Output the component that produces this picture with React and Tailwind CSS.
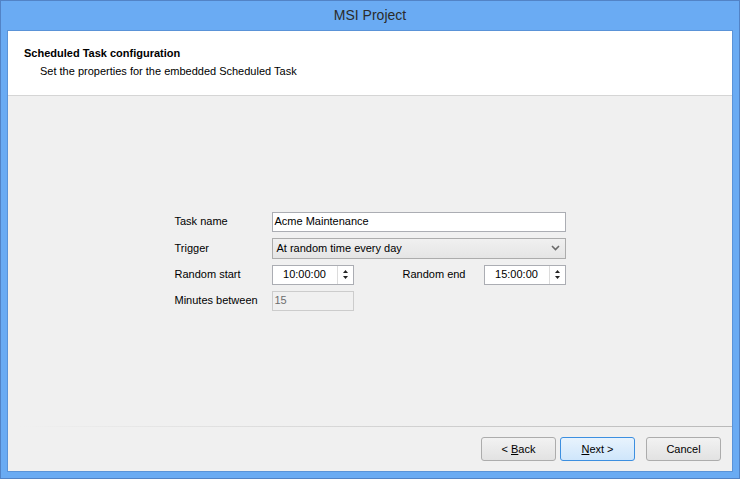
import React from 'react'

const font = { fontFamily: '"Liberation Sans", Arial, sans-serif' }

function SpinBox({ value }) {
  return (
    <div className="flex h-[20px] w-[82px] border border-[#abadb3] bg-white">
      <div className="flex-1 flex items-center justify-center text-[11px] text-black border-r border-[#dcdcdc]">
        {value}
      </div>
      <div className="w-[15px] flex flex-col items-center justify-center gap-[3px]">
        <svg width="5" height="3" viewBox="0 0 5 3"><path d="M2.5 0 L5 3 L0 3 Z" fill="#222" /></svg>
        <svg width="5" height="3" viewBox="0 0 5 3"><path d="M0 0 L5 0 L2.5 3 Z" fill="#222" /></svg>
      </div>
    </div>
  )
}

function Button({ children, primary }) {
  return (
    <button
      className={
        primary
          ? 'w-[75px] h-[24px] rounded-[3px] border border-[#3c8fe0] bg-gradient-to-b from-[#e8f3fd] to-[#cfe6fb] text-[11px] text-black'
          : 'w-[75px] h-[24px] rounded-[3px] border border-[#acacac] bg-gradient-to-b from-[#f2f2f2] to-[#e2e2e2] text-[11px] text-black'
      }
    >
      {children}
    </button>
  )
}

export default function App() {
  return (
    <div
      className="w-[740px] h-[479px] bg-[#6aabf3] border border-[#5283c6] flex flex-col"
      style={font}
    >
      {/* Title bar */}
      <div className="h-[29px] flex items-center justify-center text-[14px] text-[#2b2b2b]">
        MSI Project
      </div>

      {/* Client area */}
      <div className="mx-[6px] mb-[6px] flex-1 border border-[#5a93d8] bg-[#f0f0f0] flex flex-col">
        {/* Header */}
        <div className="h-[65px] bg-white border-b border-[#d5d5d5] pl-[16px] pt-[15px]">
          <div className="text-[11px] font-bold text-black leading-[14px]">Scheduled Task configuration</div>
          <div className="text-[11px] text-black leading-[14px] pl-[16px] mt-[4px]">
            Set the properties for the embedded Scheduled Task
          </div>
        </div>

        {/* Form */}
        <div className="flex-1 flex items-center justify-center">
          <div className="grid grid-cols-[97px_82px_49px_81px_82px] gap-y-[6px] text-[11px] text-black">
            <div className="flex items-center h-[20px]">Task name</div>
            <div className="col-span-4 h-[20px] border border-[#abadb3] bg-white flex items-center px-[2px]">
              Acme Maintenance
            </div>

            <div className="flex items-center h-[21px]">Trigger</div>
            <div className="col-span-4 h-[21px] border border-[#acacac] bg-gradient-to-b from-[#f0f0f0] to-[#e5e5e5] flex items-center justify-between pl-[4px] pr-[5px]">
              <span>At random time every day</span>
              <svg width="9" height="6" viewBox="0 0 9 6">
                <path d="M1 1 L4.5 4.5 L8 1" fill="none" stroke="#6a6a6a" strokeWidth="1.6" />
              </svg>
            </div>

            <div className="flex items-center h-[20px]">Random start</div>
            <SpinBox value="10:00:00" />
            <div />
            <div className="flex items-center h-[20px]">Random end</div>
            <SpinBox value="15:00:00" />

            <div className="flex items-center h-[20px]">Minutes between</div>
            <div className="h-[20px] border border-[#cccccc] bg-[#f0f0f0] flex items-center px-[2px] text-[#6d6d6d]">
              15
            </div>
          </div>
        </div>

        {/* Footer */}
        <div className="h-px ml-[12px] bg-gradient-to-r from-[#f0f0f0] via-[#d4d4d4] to-[#b9b9b9]" />
        <div className="flex justify-end items-center pt-[10px] pb-[10px] pr-[11px]">
          <Button>
            &lt; <span className="underline">B</span>ack
          </Button>
          <div className="w-[4px]" />
          <Button primary>
            <span className="underline">N</span>ext &gt;
          </Button>
          <div className="w-[11px]" />
          <Button>Cancel</Button>
        </div>
      </div>
    </div>
  )
}
